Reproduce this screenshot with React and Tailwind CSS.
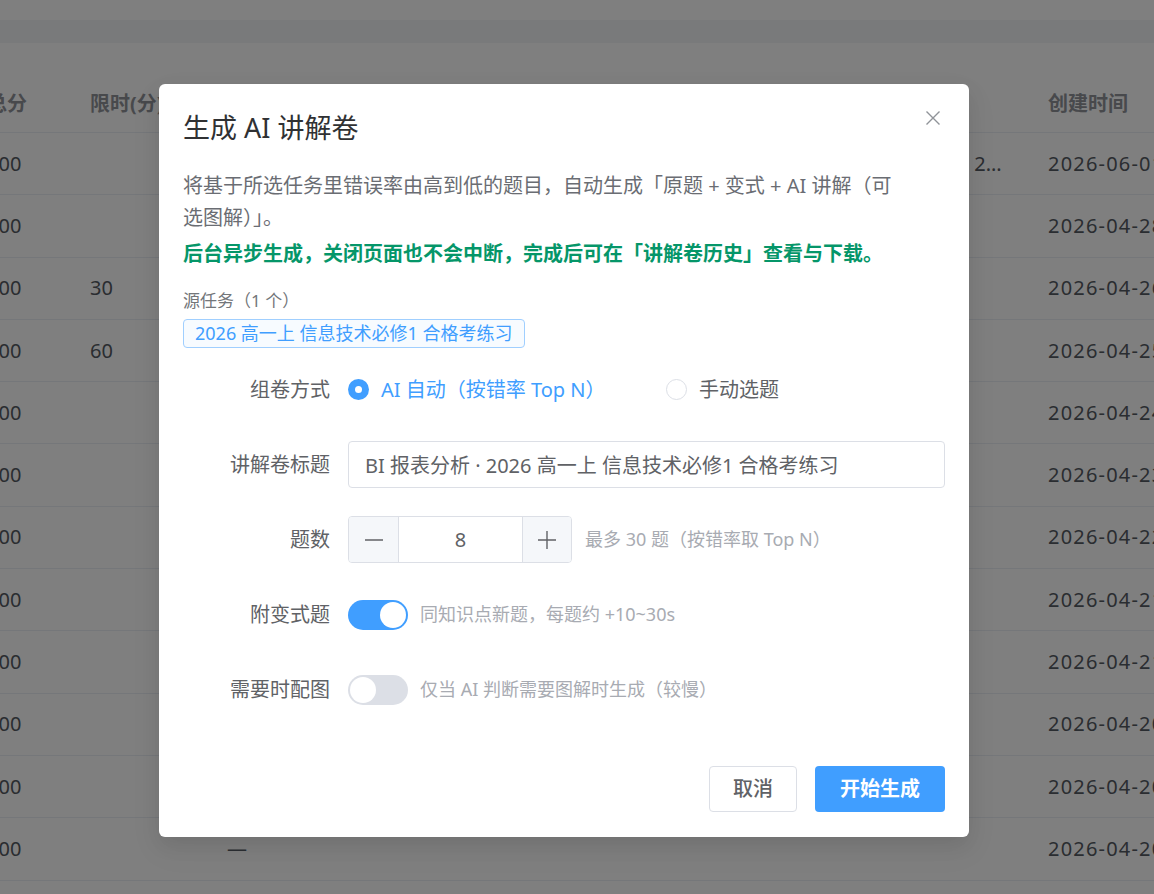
import { useState } from 'react';

// Rows of the task table sitting behind the dialog
const rows = [
  { score: '100', limit: '', paper: '—', tail: '合格考 2...', created: '2026-06-01 10:20' },
  { score: '100', limit: '', paper: '—', tail: '', created: '2026-04-28 09:12' },
  { score: '100', limit: '30', paper: '—', tail: '', created: '2026-04-26 14:40' },
  { score: '100', limit: '60', paper: '—', tail: '', created: '2026-04-25 16:03' },
  { score: '100', limit: '', paper: '—', tail: '', created: '2026-04-24 11:30' },
  { score: '100', limit: '', paper: '—', tail: '', created: '2026-04-23 08:55' },
  { score: '100', limit: '', paper: '—', tail: '', created: '2026-04-22 19:10' },
  { score: '100', limit: '', paper: '—', tail: '', created: '2026-04-21 15:45' },
  { score: '100', limit: '', paper: '—', tail: '', created: '2026-04-21 10:02' },
  { score: '100', limit: '', paper: '—', tail: '', created: '2026-04-20 13:26' },
  { score: '100', limit: '', paper: '—', tail: '', created: '2026-04-20 09:18' },
  { score: '100', limit: '', paper: '—', tail: '', created: '2026-04-20 08:01' },
];

const cols = 'grid grid-cols-[103px_135px_684px_139px_220px] items-center';

function TaskTable() {
  return (
    <div className="bg-white">
      <div className="h-[20px] bg-white" />
      <div className="h-[23px] bg-[#f3f4f6]" />
      <div className="h-[33px]" />
      <div className="-ml-[13px] w-[1300px] text-[20px]">
        <div className={`${cols} h-[57px] border-b border-[#ebeef5] font-bold text-[#909399]`}>
          <div>总分</div>
          <div>限时(分)</div>
          <div>讲解卷</div>
          <div>来源</div>
          <div>创建时间</div>
        </div>
        {rows.map((r, i) => (
          <div key={i} className={`${cols} h-[62.3px] border-b border-[#ebeef5] text-[#555a62]`}>
            <div>{r.score}</div>
            <div>{r.limit}</div>
            <div className="pl-[2px]">{r.paper}</div>
            <div className="whitespace-nowrap">{r.tail}</div>
            <div className="whitespace-nowrap tracking-[1.2px]">{r.created}</div>
          </div>
        ))}
      </div>
    </div>
  );
}

function Radio({ checked, label, onClick, className = '' }) {
  return (
    <button type="button" onClick={onClick} className={`flex items-center gap-[12px] ${className}`}>
      {checked ? (
        <span className="flex h-[21px] w-[21px] items-center justify-center rounded-full bg-[#409eff]">
          <span className="h-[7px] w-[7px] rounded-full bg-white" />
        </span>
      ) : (
        <span className="h-[21px] w-[21px] rounded-full border border-[#dcdfe6] bg-white" />
      )}
      <span className={checked ? 'text-[#409eff]' : 'text-[#606266]'}>{label}</span>
    </button>
  );
}

function Switch({ on, onClick }) {
  return (
    <button
      type="button"
      onClick={onClick}
      className={`flex h-[30px] w-[60px] shrink-0 items-center rounded-full px-[2px] ${
        on ? 'justify-end bg-[#409eff]' : 'justify-start bg-[#dcdfe6]'
      }`}
    >
      <span className="h-[26px] w-[26px] rounded-full bg-white" />
    </button>
  );
}

function FormRow({ label, children }) {
  return (
    <div className="flex h-[47px] items-center">
      <div className="w-[147px] shrink-0 text-right text-[20px] text-[#606266]">{label}</div>
      <div className="ml-[18px] flex flex-1 items-center">{children}</div>
    </div>
  );
}

export default function App() {
  const [mode, setMode] = useState('auto');
  const [count, setCount] = useState(8);
  const [variants, setVariants] = useState(true);
  const [figures, setFigures] = useState(false);

  return (
    <div
      className="relative h-[894px] w-[1154px] overflow-hidden bg-white"
      style={{ fontFamily: '"Noto Sans", "Noto Sans CJK SC", sans-serif' }}
    >
      <TaskTable />

      {/* Dialog overlay */}
      <div className="absolute inset-0 bg-black/50">
        <div className="pl-[159px] pt-[84px]">
          <div className="w-[810px] rounded-[6px] bg-white px-[24px] pb-[25px] shadow-[0_12px_32px_4px_rgba(0,0,0,0.04),0_8px_20px_rgba(0,0,0,0.08)]">
            {/* Header */}
            <div className="flex items-start justify-between pt-[24px]">
              <h2 className="text-[27px] leading-[40px] text-[#303133]">生成 AI 讲解卷</h2>
              <button type="button" className="mr-[4px] mt-[2px] text-[#909399]">
                <svg width="16" height="16" viewBox="0 0 16 16" fill="none" stroke="currentColor" strokeWidth="1.4">
                  <path d="M1.5 1.5l13 13M14.5 1.5l-13 13" />
                </svg>
              </button>
            </div>

            {/* Description */}
            <p className="mt-[22px] max-w-[722px] text-[20px] leading-[32px] text-[#6a6d73]">
              将基于所选任务里错误率由高到低的题目，自动生成「原题 + 变式 + AI 讲解（可选图解）」。
            </p>
            <p className="mt-[4px] text-[20px] font-bold leading-[32px] text-[#059669]">
              后台异步生成，关闭页面也不会中断，完成后可在「讲解卷历史」查看与下载。
            </p>

            <div className="mt-[19px] text-[17px] leading-[24px] text-[#73767a]">源任务（1 个）</div>
            <div className="mt-[6px] flex">
              <span className="flex h-[29px] items-center rounded-[4px] border border-[#a0cfff] bg-[#f7fbff] px-[11px] text-[18px] text-[#409eff]">
                2026 高一上 信息技术必修1 合格考练习
              </span>
            </div>

            {/* Form */}
            <div className="mt-[18px] flex flex-col gap-[28px]">
              <FormRow label="组卷方式">
                <div className="flex items-center text-[20px]">
                  <Radio
                    className="w-[318px]"
                    checked={mode === 'auto'}
                    label="AI 自动（按错率 Top N）"
                    onClick={() => setMode('auto')}
                  />
                  <Radio checked={mode === 'manual'} label="手动选题" onClick={() => setMode('manual')} />
                </div>
              </FormRow>

              <FormRow label="讲解卷标题">
                <input
                  defaultValue="BI 报表分析 · 2026 高一上 信息技术必修1 合格考练习"
                  className="h-[47px] w-full rounded-[4px] border border-[#dcdfe6] px-[16px] text-[20px] text-[#606266] outline-none"
                />
              </FormRow>

              <FormRow label="题数">
                <div className="flex h-[47px] w-[224px] overflow-hidden rounded-[4px] border border-[#dcdfe6]">
                  <button
                    type="button"
                    onClick={() => setCount((c) => Math.max(1, c - 1))}
                    className="flex w-[50px] items-center justify-center border-r border-[#dcdfe6] bg-[#f5f7fa] text-[#606266]"
                  >
                    <svg width="20" height="20" viewBox="0 0 20 20" stroke="currentColor" strokeWidth="1.4">
                      <path d="M1 10h18" />
                    </svg>
                  </button>
                  <div className="flex flex-1 items-center justify-center text-[20px] text-[#606266]">{count}</div>
                  <button
                    type="button"
                    onClick={() => setCount((c) => Math.min(30, c + 1))}
                    className="flex w-[49px] items-center justify-center border-l border-[#dcdfe6] bg-[#f5f7fa] text-[#606266]"
                  >
                    <svg width="20" height="20" viewBox="0 0 20 20" stroke="currentColor" strokeWidth="1.4">
                      <path d="M1 10h18M10 1v18" />
                    </svg>
                  </button>
                </div>
                <span className="ml-[13px] text-[18px] text-[#a8abb2]">最多 30 题（按错率取 Top N）</span>
              </FormRow>

              <FormRow label="附变式题">
                <Switch on={variants} onClick={() => setVariants(!variants)} />
                <span className="ml-[12px] text-[18px] text-[#a8abb2]">同知识点新题，每题约 +10~30s</span>
              </FormRow>

              <FormRow label="需要时配图">
                <Switch on={figures} onClick={() => setFigures(!figures)} />
                <span className="ml-[12px] text-[18px] text-[#a8abb2]">仅当 AI 判断需要图解时生成（较慢）</span>
              </FormRow>
            </div>

            {/* Footer */}
            <div className="mt-[53px] flex justify-end gap-[18px]">
              <button
                type="button"
                className="h-[46px] rounded-[4px] border border-[#dcdfe6] bg-white px-[23px] text-[20px] font-medium text-[#606266]"
              >
                取消
              </button>
              <button
                type="button"
                className="h-[46px] rounded-[4px] bg-[#409eff] px-[25px] text-[20px] font-bold text-white"
              >
                开始生成
              </button>
            </div>
          </div>
        </div>
      </div>
    </div>
  );
}
